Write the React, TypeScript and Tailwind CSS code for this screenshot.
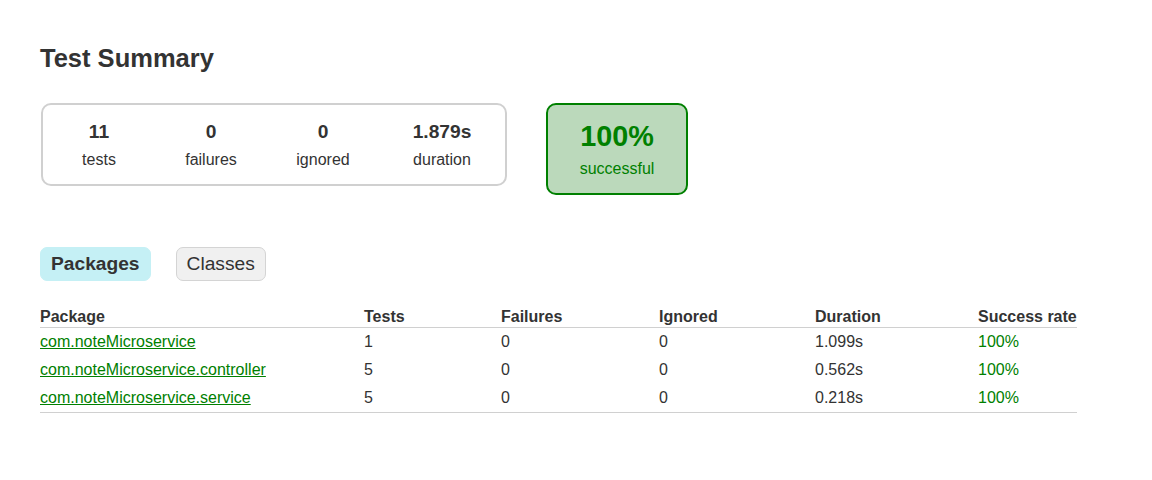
const counters = [
  { value: '11', label: 'tests', width: 'w-[112px]' },
  { value: '0', label: 'failures', width: 'w-[112px]' },
  { value: '0', label: 'ignored', width: 'w-[112px]' },
  { value: '1.879s', label: 'duration', width: 'w-[126px]' },
];

const packages = [
  { name: 'com.noteMicroservice', tests: 1, failures: 0, ignored: 0, duration: '1.099s', rate: '100%' },
  { name: 'com.noteMicroservice.controller', tests: 5, failures: 0, ignored: 0, duration: '0.562s', rate: '100%' },
  { name: 'com.noteMicroservice.service', tests: 5, failures: 0, ignored: 0, duration: '0.218s', rate: '100%' },
];

const columns = ['Package', 'Tests', 'Failures', 'Ignored', 'Duration', 'Success rate'];

const rowGrid = 'grid grid-cols-[324px_137px_158px_156px_163px_99px]';

export default function App() {
  return (
    <div className="min-h-screen bg-white text-[#333] font-['Liberation_Sans',Arial,sans-serif] text-[16px]">
      <div className="pl-10 pt-[43px]">
        <h1 className="text-[25.5px] font-bold leading-[30px]">Test Summary</h1>

        {/* Summary */}
        <div className="mt-[30px] flex items-start">
          <div className="flex rounded-[10px] border-2 border-[#d0d0d0] ml-px">
            {counters.map((c) => (
              <div key={c.label} className={`${c.width} pt-[16px] pb-[15px] text-center`}>
                <div className="text-[19.2px] font-bold leading-[22px] mb-2">{c.value}</div>
                <div className="leading-[18px]">{c.label}</div>
              </div>
            ))}
          </div>
          <div className="ml-[39px] w-[142px] rounded-[10px] border-2 border-[#008000] bg-[#bbd9bb] pt-[15px] pb-[15px] text-center text-[#008000]">
            <div className="text-[28.8px] font-bold leading-[32px] mb-2">100%</div>
            <div className="leading-[18px]">successful</div>
          </div>
        </div>

        {/* Tabs */}
        <div className="mt-[52px] flex gap-[25px]">
          <div className="rounded-[7px] border border-[#c5f0f5] bg-[#c5f0f5] px-[10px] py-[5px] text-[19.2px] font-bold leading-[22px]">
            Packages
          </div>
          <div className="rounded-[7px] border border-[#d4d4d4] bg-[#f0f0f0] px-[10px] py-[5px] text-[19.2px] leading-[22px]">
            Classes
          </div>
        </div>

        {/* Table */}
        <div className="mt-[24px] w-[1037px]">
          <div className={`${rowGrid} border-b border-[#d0d0d0] pb-[1px]`}>
            {columns.map((col) => (
              <div key={col} className="font-bold leading-[18px] pt-[3px] whitespace-nowrap">{col}</div>
            ))}
          </div>
          <div className="border-b border-[#d0d0d0]">
            {packages.map((p) => (
              <div key={p.name} className={`${rowGrid} py-[5px] leading-[18px]`}>
                <div>
                  <a href="#" className="text-[#008000] underline">{p.name}</a>
                </div>
                <div>{p.tests}</div>
                <div>{p.failures}</div>
                <div>{p.ignored}</div>
                <div>{p.duration}</div>
                <div className="text-[#008000]">{p.rate}</div>
              </div>
            ))}
          </div>
        </div>
      </div>
    </div>
  );
}
